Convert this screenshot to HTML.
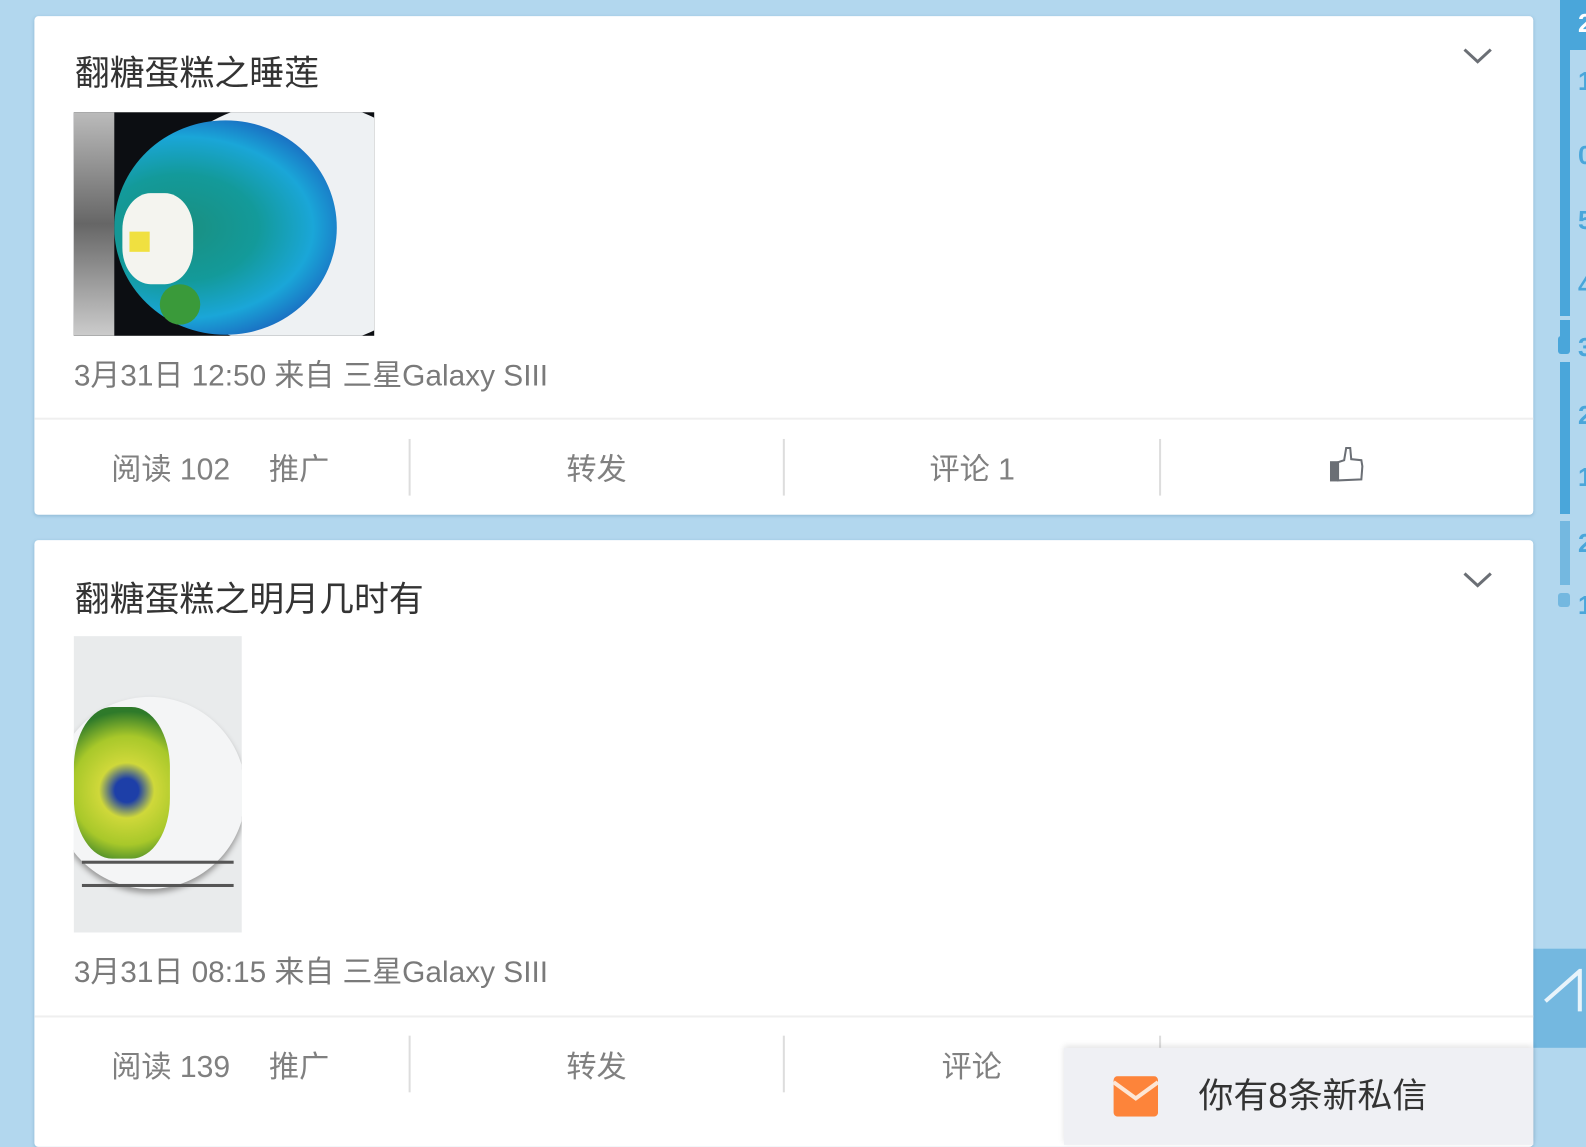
<!DOCTYPE html>
<html><head><meta charset="utf-8"><style>
*{margin:0;padding:0;box-sizing:border-box}
body{width:1586px;height:1120px;overflow:hidden;background:#b2d7ee;font-family:"Liberation Sans","Noto Sans CJK SC",sans-serif;position:relative}
#w{position:absolute;left:0;top:0;width:1586px;height:1120px;transform:scale(1.0114);transform-origin:0 0}
.card{position:absolute;left:34px;width:1482px;background:#fff;border-radius:4px;box-shadow:0 1px 3px rgba(80,130,170,.35)}
.title{position:absolute;left:40px;font-size:34.5px;color:#333}
.meta{position:absolute;left:39px;font-size:29.5px;color:#7a7a7a}
.chev{position:absolute;left:1412px;width:30px;height:18px}
.bar{position:absolute;left:0;width:1482px;border-top:2px solid #efefef}
.act{position:absolute;font-size:29.8px;color:#808080}
.sep{position:absolute;width:2px;height:56px;background:#ddd}
.rd{position:absolute;left:1578px;font-size:26px;font-weight:bold;color:#4aa6da}
</style></head><body>
<div style="position:absolute;left:1560px;top:0;width:26px;height:50px;background:#4aa6da"></div>
<div style="position:absolute;left:1560px;top:0;width:10px;height:316px;background:#4aa6da"></div>
<div style="position:absolute;left:1560px;top:320px;width:10px;height:24px;background:#4aa6da"></div>
<div style="position:absolute;left:1558px;top:336px;width:12px;height:18px;background:#4aa6da;border-radius:3px"></div>
<div style="position:absolute;left:1560px;top:362px;width:10px;height:152px;background:#4aa6da"></div>
<div style="position:absolute;left:1560px;top:521px;width:10px;height:64px;background:#74b8e0"></div>
<div style="position:absolute;left:1558px;top:593px;width:12px;height:14px;background:#74b8e0;border-radius:3px"></div>
<div class="rd" style="top:8px;color:#fff">2</div>
<div class="rd" style="top:66px">1</div>
<div class="rd" style="top:140px">0</div>
<div class="rd" style="top:205px">5</div>
<div class="rd" style="top:270px">4</div>
<div class="rd" style="top:332px">3</div>
<div class="rd" style="top:400px">2</div>
<div class="rd" style="top:462px">1</div>
<div class="rd" style="top:528px">2</div>
<div class="rd" style="top:590px">1</div>
<div id="w">
<div style="position:absolute;left:1516px;top:938px;width:70px;height:98px;background:#74b8e0"></div>
<svg style="position:absolute;left:1526px;top:958px" width="60" height="50"><path d="M2 32 L36 2 L36 42" stroke="#e8f4fb" stroke-width="4" fill="none"/></svg>

<div class="card" style="top:16px;height:493px">
 <div class="title" style="top:28px">翻糖蛋糕之睡莲</div>
 <svg class="chev" style="top:30px"><path d="M2 3 L15 15 L28 3" stroke="#6b6f75" stroke-width="3" fill="none"/></svg>
 <div style="position:absolute;left:39px;top:95px;width:297px;height:221px;background:#0c0e12;overflow:hidden">
  <div style="position:absolute;left:70px;top:-12px;width:300px;height:245px;border-radius:50%;background:#eef1f3"></div>
  <div style="position:absolute;left:40px;top:8px;width:220px;height:212px;border-radius:50%;background:radial-gradient(ellipse at 30% 50%,#1a8f80 0%,#139a9a 35%,#1aa6d8 60%,#1a55b8 85%)"></div>
  <div style="position:absolute;left:0;top:0;width:40px;height:221px;background:linear-gradient(#bbb,#666,#ccc)"></div>
  <div style="position:absolute;left:48px;top:80px;width:70px;height:90px;background:#f4f4ef;border-radius:40%"></div>
  <div style="position:absolute;left:55px;top:118px;width:20px;height:20px;background:#f0e040"></div>
  <div style="position:absolute;left:85px;top:170px;width:40px;height:40px;background:#3a9a3a;border-radius:50%"></div>
 </div>
 <div class="meta" style="top:332px">3月31日 12:50 来自 三星Galaxy SIII</div>
 <div class="bar" style="top:397px"></div>
 <div class="act" style="left:76px;top:423px">阅读 102</div>
 <div class="act" style="left:232px;top:423px">推广</div>
 <div class="sep" style="left:370px;top:418px"></div>
 <div class="act" style="left:526px;top:423px">转发</div>
 <div class="sep" style="left:740px;top:418px"></div>
 <div class="act" style="left:885px;top:423px">评论 1</div>
 <div class="sep" style="left:1112px;top:418px"></div>
 <svg style="position:absolute;left:1280px;top:425px" width="36" height="36"><rect x="1" y="15" width="8" height="20" fill="#6b6f75"/><path d="M9 16 L15 14 L17 2 L21 2 L22 13 L32 14 L33 20 L32 33 L9 34 Z" fill="#fff" stroke="#6b6f75" stroke-width="2"/></svg>
</div>

<div class="card" style="top:534px;height:600px">
 <div class="title" style="top:30px">翻糖蛋糕之明月几时有</div>
 <svg class="chev" style="top:30px"><path d="M2 3 L15 15 L28 3" stroke="#6b6f75" stroke-width="3" fill="none"/></svg>
 <div style="position:absolute;left:39px;top:95px;width:166px;height:293px;background:#e9ebec;overflow:hidden">
  <div style="position:absolute;left:-20px;top:60px;width:190px;height:190px;border-radius:50%;background:#f4f5f6;box-shadow:0 4px 6px #999"></div>
  <div style="position:absolute;left:0;top:70px;width:95px;height:150px;border-radius:40%;background:radial-gradient(circle at 55% 55%,#1d3fa8 0 12%,#cfd83a 28%,#a8c82a 55%,#2e7a2a 80%)"></div>
  <div style="position:absolute;left:8px;top:222px;width:150px;height:26px;border:3px solid #555;border-left:none;border-right:none"></div>
 </div>
 <div class="meta" style="top:404px">3月31日 08:15 来自 三星Galaxy SIII</div>
 <div class="bar" style="top:470px"></div>
 <div class="act" style="left:76px;top:496px">阅读 139</div>
 <div class="act" style="left:232px;top:496px">推广</div>
 <div class="sep" style="left:370px;top:490px"></div>
 <div class="act" style="left:526px;top:496px">转发</div>
 <div class="sep" style="left:740px;top:490px"></div>
 <div class="act" style="left:897px;top:496px">评论</div>
 <div class="sep" style="left:1112px;top:490px"></div>
</div>

<div style="position:absolute;left:1052px;top:1036px;width:464px;height:96px;background:#eff0f4;box-shadow:0 -2px 6px rgba(0,0,0,.12)">
 <svg style="position:absolute;left:49px;top:28px" width="44" height="40"><rect width="44" height="40" rx="4" fill="#fd843a"/><path d="M0 6 L22 22 L44 6" stroke="#fde6d5" stroke-width="4" fill="none"/></svg>
 <div style="position:absolute;left:133px;top:19px;font-size:34.5px;color:#333">你有8条新私信</div>
</div>
</div>
</body></html>
